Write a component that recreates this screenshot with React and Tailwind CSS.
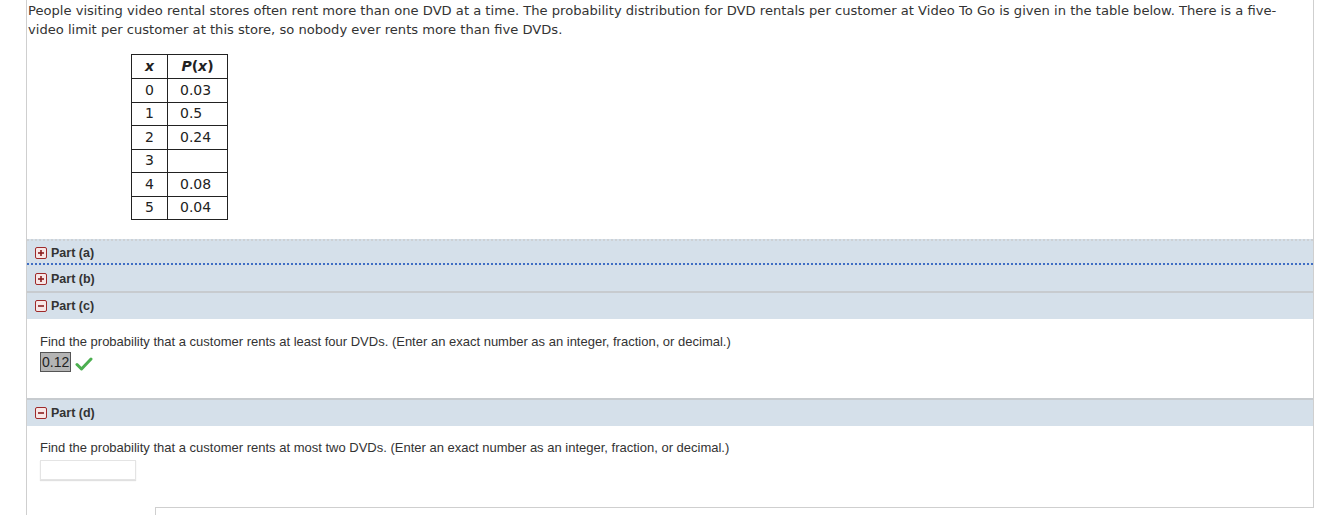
import React from "react";

const rows = [
  ["0", "0.03"],
  ["1", "0.5"],
  ["2", "0.24"],
  ["3", ""],
  ["4", "0.08"],
  ["5", "0.04"],
];

function ToggleIcon({ open }) {
  return (
    <svg width="12" height="12" viewBox="0 0 12 12" className="shrink-0">
      <rect x="0.5" y="0.5" width="11" height="11" rx="1.5" fill="#f7e6e6" stroke="#9e2a2a" />
      <path d="M3 6h6" stroke="#8c1f1f" strokeWidth="1.6" />
      {!open && <path d="M6 3v6" stroke="#8c1f1f" strokeWidth="1.6" />}
    </svg>
  );
}

function PartBar({ label, open, className }) {
  return (
    <div className={`flex items-center gap-[4px] pl-[8px] bg-[#d5e0ea] text-[12.5px] font-bold text-[#333] ${className}`}>
      <ToggleIcon open={open} />
      <span>{label}</span>
    </div>
  );
}

export default function App() {
  return (
    <div className="w-[1320px] h-[515px] bg-white overflow-hidden" style={{ fontFamily: "'DejaVu Sans', Verdana, sans-serif" }}>
      <div className="ml-[26px] w-[1288px] h-[515px] border-l border-[#cfcfcf] flex flex-col">
        <div className="border-r border-[#cfcfcf] h-[507px]">
          {/* Question text */}
          <p className="pl-[1px] pr-[30px] pt-[1px] text-[13.1px] leading-[19px] text-[#333]">
            People visiting video rental stores often rent more than one DVD at a time. The probability distribution for DVD rentals per customer at Video To Go is given in the table below. There is a five-video limit per customer at this store, so nobody ever rents more than five DVDs.
          </p>

          {/* Table */}
          <table className="ml-[104px] mt-[15px] border-collapse text-[14px] text-[#222]">
            <thead>
              <tr className="h-[24px]">
                <th className="w-[36px] border border-[#222] font-bold italic text-center">x</th>
                <th className="w-[60px] border border-[#222] font-bold text-center">
                  <i>P</i>(<i>x</i>)
                </th>
              </tr>
            </thead>
            <tbody>
              {rows.map(([x, p]) => (
                <tr key={x} className="h-[23.5px]">
                  <td className="border border-[#222] text-center">{x}</td>
                  <td className="border border-[#222] pl-[12px]">{p}</td>
                </tr>
              ))}
            </tbody>
          </table>

          {/* Parts */}
          <div className="mt-[19px]" style={{ fontFamily: "'Liberation Sans', Arial, sans-serif" }}>
            <PartBar label="Part (a)" className="h-[26px] pt-[2px] border-t-2 border-t-[#cdd1d5] border-b-2 border-dotted border-b-[#3f6ec4]" />
            <PartBar label="Part (b)" className="h-[28px] pt-[2px] border-b-2 border-b-[#c7cbcf]" />
            <PartBar label="Part (c)" open className="h-[26px]" />

            <div className="pl-[13px] pt-[15px] h-[79px] text-[13px] text-[#333]">
              <p className="leading-[16px]">
                Find the probability that a customer rents at least four DVDs. (Enter an exact number as an integer, fraction, or decimal.)
              </p>
              <div className="mt-[2px] flex items-center gap-[4px]">
                <span className="inline-block border border-[#555] bg-[#b4b4b4] px-[1px] text-[14px] leading-[18px] text-[#222]">0.12</span>
                <svg width="18" height="14" viewBox="0 0 18 14" className="mt-[4px]">
                  <path d="M2 7.5l4.5 4.5L16 2" fill="none" stroke="#4caf50" strokeWidth="3" strokeLinecap="round" strokeLinejoin="round" />
                </svg>
              </div>
            </div>

            <PartBar label="Part (d)" open className="h-[28px] border-t-2 border-t-[#c7cbcf]" />

            <div className="pl-[13px] pt-[14px] text-[13px] text-[#333]">
              <p className="leading-[16px]">
                Find the probability that a customer rents at most two DVDs. (Enter an exact number as an integer, fraction, or decimal.)
              </p>
              <div className="mt-[4px] w-[96px] h-[20px] border border-[#e4e4e4] shadow-[0_1px_1px_rgba(0,0,0,0.12)]" />
            </div>
          </div>
        </div>
        <div className="ml-[128px] flex-1 border-l border-t border-[#cfcfcf]" />
      </div>
    </div>
  );
}
